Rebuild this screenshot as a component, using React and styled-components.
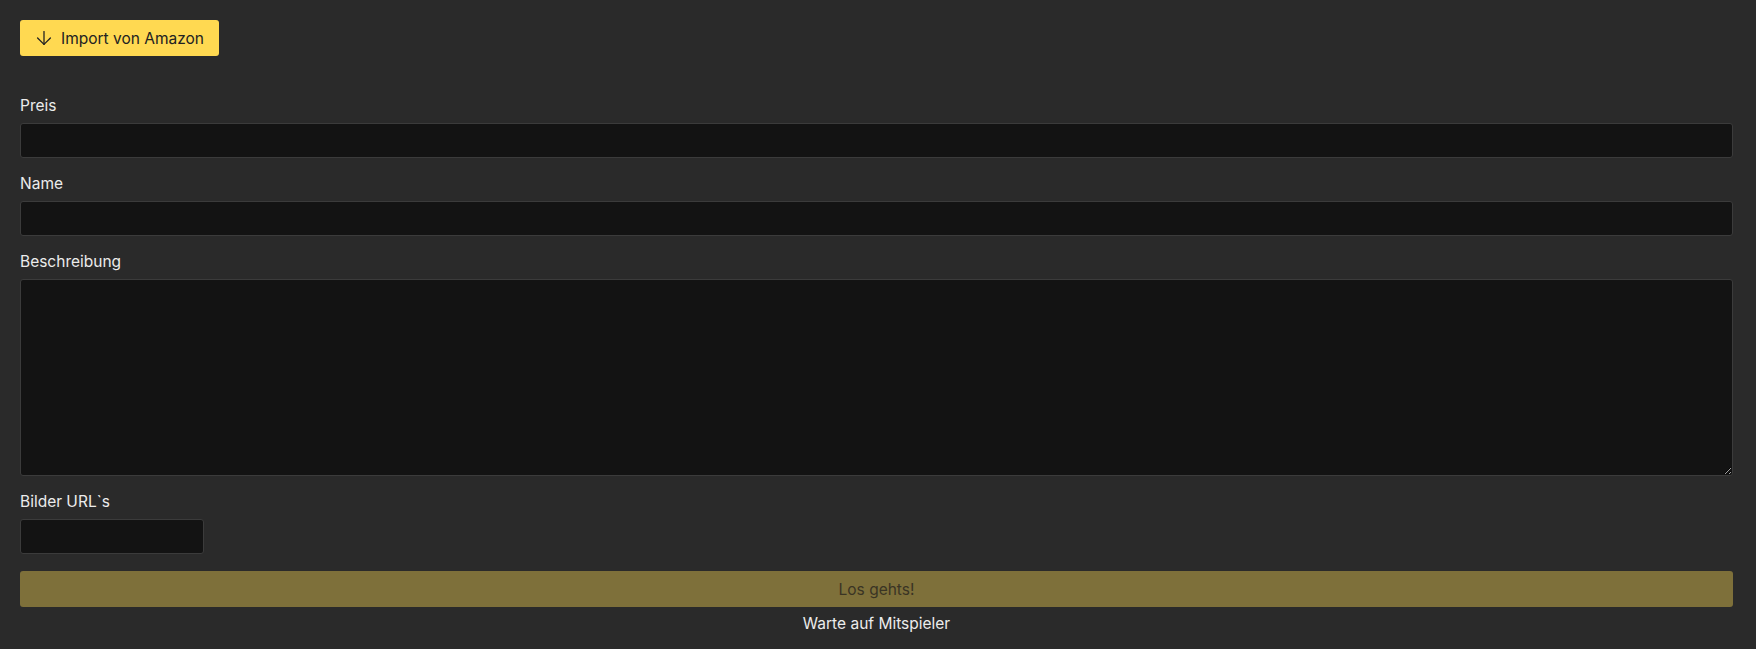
import React from 'react'
import styled, { createGlobalStyle } from 'styled-components'
import { ArrowDown } from 'lucide-react'

const GlobalStyle = createGlobalStyle`
  html, body {
    margin: 0;
    background: #2a2a2a;
    font-family: Inter, "Noto Sans", sans-serif;
  }
`

const Page = styled.div`
  padding: 20px 23px 20px 20px;
  color: #ececec;
`

const ImportButton = styled.button`
  display: inline-flex;
  align-items: center;
  gap: 6px;
  height: 36px;
  padding: 0 15px 0 13px;
  border: none;
  border-radius: 3px;
  background: #ffd951;
  color: #222;
  font: 15.5px Inter, sans-serif;
  cursor: pointer;
`

const Form = styled.form`
  display: flex;
  flex-direction: column;
  margin-top: 38px;
`

const Group = styled.div`
  display: flex;
  flex-direction: column;
  margin-bottom: 14px;
`

const Label = styled.label`
  font-size: 15.5px;
  line-height: 24px;
  margin-bottom: 5px;
  color: #ececec;
`

const Field = styled.input`
  box-sizing: border-box;
  height: 35px;
  width: ${p => (p.$narrow ? '184px' : '100%')};
  background: #131313;
  border: 1px solid #3b3b3b;
  border-radius: 3px;
  color: #eee;
  padding: 0 10px;
  font: 15px Inter, sans-serif;
  outline: none;
`

const Area = styled.textarea`
  box-sizing: border-box;
  height: 197px;
  width: 100%;
  background: #131313;
  border: 1px solid #3b3b3b;
  border-radius: 3px;
  color: #eee;
  padding: 8px 10px;
  font: 15px Inter, sans-serif;
  outline: none;
  resize: vertical;
  display: block;
`

const SubmitButton = styled.button`
  margin-top: 3px;
  height: 36px;
  border: none;
  border-radius: 3px;
  background: #7e703a;
  color: #3a3424;
  font: 15.5px Inter, sans-serif;
`

const Status = styled.div`
  text-align: center;
  font-size: 15.5px;
  line-height: 24px;
  margin-top: 5px;
  color: #ececec;
`

export default function App() {
  return (
    <Page>
      <GlobalStyle />
      <ImportButton type="button">
        <ArrowDown size={22} strokeWidth={1.4} />
        Import von Amazon
      </ImportButton>
      <Form onSubmit={e => e.preventDefault()}>
        <Group>
          <Label>Preis</Label>
          <Field />
        </Group>
        <Group>
          <Label>Name</Label>
          <Field />
        </Group>
        <Group>
          <Label>Beschreibung</Label>
          <Area />
        </Group>
        <Group>
          <Label>Bilder URL`s</Label>
          <Field $narrow />
        </Group>
        <SubmitButton type="submit" disabled>Los gehts!</SubmitButton>
        <Status>Warte auf Mitspieler</Status>
      </Form>
    </Page>
  )
}
